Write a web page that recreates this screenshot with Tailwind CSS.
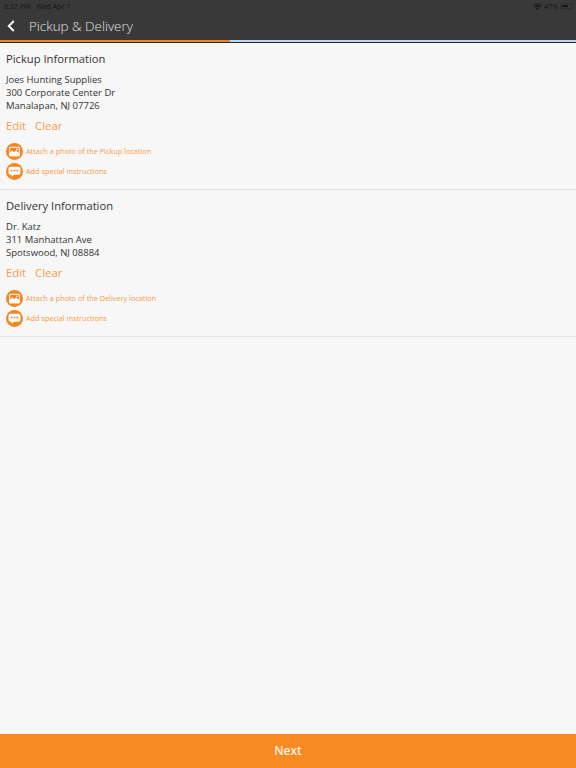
<!doctype html>
<html lang="en">
  <head>
    <meta charset="UTF-8" />
    <title>Pickup &amp; Delivery</title>
    <script src="https://cdn.jsdelivr.net/npm/@tailwindcss/browser@4"></script>
  </head>
  <body class="bg-[#f7f7f7] font-['Open_Sans',sans-serif]">
    <div class="flex h-[768px] flex-col overflow-hidden">
      <!-- header -->
      <header class="h-[40px] shrink-0 bg-[#393939]">
        <div class="flex h-[12px] items-center justify-between pl-[4px] pr-[3px] text-[7px] leading-none text-[#151515]">
          <div class="flex gap-[6px]">
            <span>6:32 PM</span>
            <span>Wed Apr 7</span>
          </div>
          <div class="flex items-center gap-[2px]">
            <svg width="9" height="7" viewBox="0 0 18 14" fill="#151515">
              <path d="M9 14 6 10.6a4.4 4.4 0 0 1 6 0zM4.4 8.9 2.7 7a9.4 9.4 0 0 1 12.6 0l-1.7 1.9a6.9 6.9 0 0 0-9.2 0zM1.5 5.6 0 3.9a13.4 13.4 0 0 1 18 0l-1.5 1.7a11.2 11.2 0 0 0-15 0z" />
            </svg>
            <span>47%</span>
            <div class="flex h-[6px] w-[13px] items-center rounded-[2px] border border-[#2c2c2c] p-px">
              <div class="h-full w-[6px] bg-[#151515]"></div>
            </div>
          </div>
        </div>
        <div class="flex h-[28px] items-center pl-[7px]">
          <svg width="8" height="12" viewBox="0 0 8 12" fill="none" stroke="#f4f4f4" stroke-width="2">
            <path d="M6.8 1 1.8 6l5 5" />
          </svg>
          <h1 class="ml-[14px] text-[13.4px] font-light text-[#e2e2e2]">Pickup &amp; Delivery</h1>
        </div>
      </header>
      <!-- progress -->
      <div class="flex h-[2px] shrink-0">
        <div class="w-[230px] bg-[#f5851f]"></div>
        <div class="flex-1 bg-[#c0d5ec]"></div>
      </div>

      <main class="flex-1 border-t border-[#2a2a2a]">
        <section class="h-[147px] border-b border-[#e3e3e3] pl-[6px] pt-[7px]">
          <h2 class="text-[11.2px] leading-[18px] text-[#333]">Pickup Information</h2>
          <div class="mt-[5px] text-[9.5px] leading-[13px] text-[#333]">
            <p>Joes Hunting Supplies</p>
            <p>300 Corporate Center Dr</p>
            <p>Manalapan, NJ 07726</p>
          </div>
          <div class="mt-[5px] flex gap-[9px] text-[11.3px] leading-[18px] text-[#f79a4a]">
            <span>Edit</span>
            <span>Clear</span>
          </div>
          <div class="mt-[6px] flex h-[20px] items-center gap-[3px]">
            <svg width="17" height="17" viewBox="0 0 17 17" class="shrink-0">
              <circle cx="8.5" cy="8.5" r="8.5" fill="#f5851f" />
              <rect x="3.2" y="3.800" width="10.600" height="9.400" rx="1.200" fill="#fff" />
              <rect x="4.200" y="4.800" width="8.600" height="4.800" fill="#f5851f" />
              <circle cx="11" cy="6.400" r=".8" fill="#fff" />
              <path d="M3.200 11 6 7.500l2.200 1.700 1.800-1.600 3.800 3.400v2.200H3.200z" fill="#fff" />
            </svg>
            <span class="text-[7.3px] text-[#f79a4a]">Attach a photo of the Pickup location</span>
          </div>
          <div class="flex h-[20px] items-center gap-[3px]">
            <svg width="17" height="17" viewBox="0 0 17 17" class="shrink-0">
              <circle cx="8.5" cy="8.5" r="8.5" fill="#f5851f" />
              <path d="M4.500 3.800h8a2 2 0 0 1 2 2v3.900a2 2 0 0 1-2 2H8L5.500 14v-2.300h-1a2 2 0 0 1-2-2V5.800a2 2 0 0 1 2-2z" fill="#fff" />
              <rect x="4.800" y="6.700" width="1.700" height="1.700" fill="#f5851f" />
              <rect x="7.650" y="6.700" width="1.700" height="1.700" fill="#f5851f" />
              <rect x="10.500" y="6.700" width="1.700" height="1.700" fill="#f5851f" />
            </svg>
            <span class="text-[7.3px] text-[#f79a4a]">Add special instructions</span>
          </div>
        </section>

        <section class="h-[147px] border-b border-[#e3e3e3] pl-[6px] pt-[7px]">
          <h2 class="text-[11.2px] leading-[18px] text-[#333]">Delivery Information</h2>
          <div class="mt-[5px] text-[9.5px] leading-[13px] text-[#333]">
            <p>Dr. Katz</p>
            <p>311 Manhattan Ave</p>
            <p>Spotswood, NJ 08884</p>
          </div>
          <div class="mt-[5px] flex gap-[9px] text-[11.3px] leading-[18px] text-[#f79a4a]">
            <span>Edit</span>
            <span>Clear</span>
          </div>
          <div class="mt-[6px] flex h-[20px] items-center gap-[3px]">
            <svg width="17" height="17" viewBox="0 0 17 17" class="shrink-0">
              <circle cx="8.5" cy="8.5" r="8.5" fill="#f5851f" />
              <rect x="3.2" y="3.800" width="10.600" height="9.400" rx="1.200" fill="#fff" />
              <rect x="4.200" y="4.800" width="8.600" height="4.800" fill="#f5851f" />
              <circle cx="11" cy="6.400" r=".8" fill="#fff" />
              <path d="M3.200 11 6 7.500l2.200 1.700 1.800-1.600 3.800 3.400v2.200H3.200z" fill="#fff" />
            </svg>
            <span class="text-[7.3px] text-[#f79a4a]">Attach a photo of the Delivery location</span>
          </div>
          <div class="flex h-[20px] items-center gap-[3px]">
            <svg width="17" height="17" viewBox="0 0 17 17" class="shrink-0">
              <circle cx="8.5" cy="8.5" r="8.5" fill="#f5851f" />
              <path d="M4.500 3.800h8a2 2 0 0 1 2 2v3.900a2 2 0 0 1-2 2H8L5.500 14v-2.300h-1a2 2 0 0 1-2-2V5.800a2 2 0 0 1 2-2z" fill="#fff" />
              <rect x="4.800" y="6.700" width="1.700" height="1.700" fill="#f5851f" />
              <rect x="7.650" y="6.700" width="1.700" height="1.700" fill="#f5851f" />
              <rect x="10.500" y="6.700" width="1.700" height="1.700" fill="#f5851f" />
            </svg>
            <span class="text-[7.3px] text-[#f79a4a]">Add special instructions</span>
          </div>
        </section>
      </main>

      <button class="h-[34px] shrink-0 bg-[#f78a22] text-[12px] font-semibold text-[#fdf3e8]">Next</button>
    </div>
  </body>
</html>
